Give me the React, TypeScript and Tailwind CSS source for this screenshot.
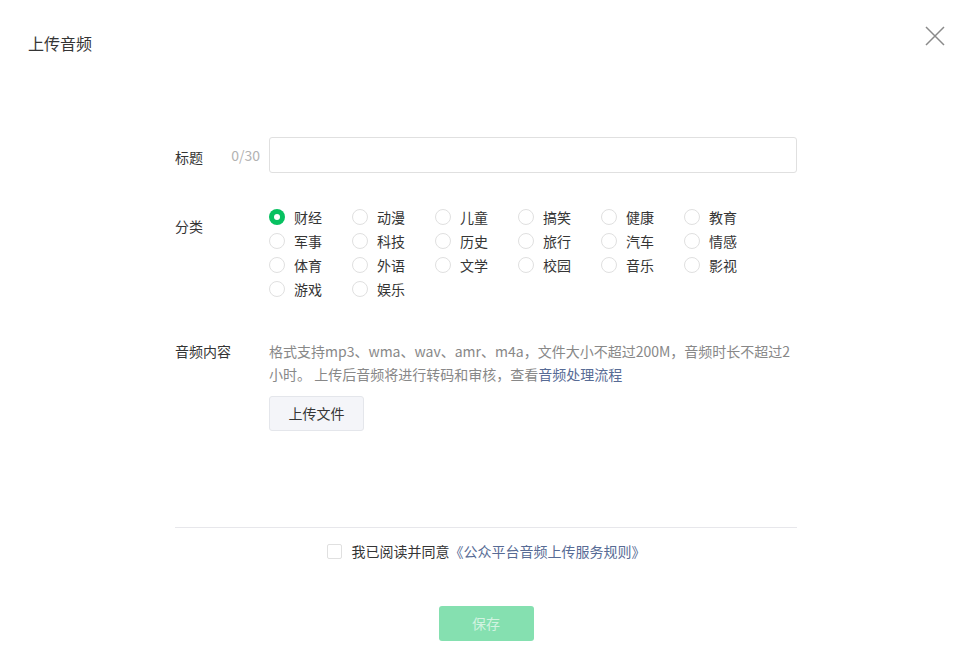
import React from 'react';

const CATEGORIES = [
  '财经', '动漫', '儿童', '搞笑', '健康', '教育',
  '军事', '科技', '历史', '旅行', '汽车', '情感',
  '体育', '外语', '文学', '校园', '音乐', '影视',
  '游戏', '娱乐',
];

const Radio: React.FC<{ label: string; checked?: boolean }> = ({ label, checked }) => (
  <label className="flex items-center h-6 cursor-pointer">
    {checked ? (
      <span className="w-4 h-4 rounded-full bg-[#07c160] flex items-center justify-center">
        <span className="w-[6px] h-[6px] rounded-full bg-white" />
      </span>
    ) : (
      <span className="w-4 h-4 rounded-full border border-[#e0e0e0] bg-white" />
    )}
    <span className="ml-[9px] text-[14px] text-[#353535] leading-5">{label}</span>
  </label>
);

export default function App() {
  const [selected] = React.useState('财经');

  return (
    <div
      className="relative w-[965px] h-[666px] bg-white overflow-hidden"
      style={{ fontFamily: '"Noto Sans CJK SC", "Noto Sans", sans-serif' }}
    >
      {/* --- HEADER --- */}
      <div className="pt-[33px] pl-[28px] text-[16px] leading-5 text-[#353535]">上传音频</div>
      <button className="absolute top-[26px] left-[925px] w-5 h-5">
        <svg viewBox="0 0 20 20" className="w-5 h-5">
          <path d="M1 1 L19 19 M19 1 L1 19" stroke="#8a8a8a" strokeWidth="1.5" fill="none" />
        </svg>
      </button>

      {/* --- FORM --- */}
      <div className="ml-[175px] w-[622px] mt-[84px]">
        {/* title */}
        <div className="flex items-center h-9">
          <div className="w-[94px] flex items-center justify-between pr-[9px]">
            <span className="text-[14px] text-[#353535] pt-[5px]">标题</span>
            <span className="text-[14px] text-[#b2b2b2]">0/30</span>
          </div>
          <input className="flex-1 h-9 border border-[#e0e0e0] rounded-[3px] px-3 text-[14px] outline-none" />
        </div>

        {/* category */}
        <div className="flex mt-[32px]">
          <div className="w-[94px] pt-[11px] text-[14px] leading-5 text-[#353535]">分类</div>
          <div className="grid grid-cols-[repeat(6,83px)] auto-rows-[24px]">
            {CATEGORIES.map(c => (
              <Radio key={c} label={c} checked={c === selected} />
            ))}
          </div>
        </div>

        {/* audio */}
        <div className="flex mt-[39px]">
          <div className="w-[94px] text-[14px] leading-[23px] text-[#353535]">音频内容</div>
          <div className="flex-1">
            <p className="text-[14px] leading-[23px] text-[#888888] whitespace-nowrap">
              格式支持mp3、wma、wav、amr、m4a，文件大小不超过200M，音频时长不超过2
              <br />
              小时。 上传后音频将进行转码和审核，查看<a className="text-[#576b95]">音频处理流程</a>
            </p>
            <button className="mt-[10px] w-[95px] h-[35px] bg-[#f4f5f9] border border-[#e4e6eb] rounded-[3px] text-[14px] text-[#353535]">
              上传文件
            </button>
          </div>
        </div>

        <div className="mt-[96px] h-px bg-[#e7e7eb]" />

        <div className="flex items-center justify-center mt-[15px] h-[16px]">
          <span className="w-[15px] h-[15px] border border-[#e0e0e0] rounded-[2px] bg-white" />
          <span className="ml-[10px] text-[14px] text-[#353535]">我已阅读并同意</span>
          <a className="text-[14px] text-[#576b95]">《公众平台音频上传服务规则》</a>
        </div>

        <div className="flex justify-center mt-[47px]">
          <button className="w-[95px] h-[35px] rounded-[3px] bg-[#85e0b0] text-[14px] text-[#d2f3e1]">保存</button>
        </div>
      </div>
    </div>
  );
}
